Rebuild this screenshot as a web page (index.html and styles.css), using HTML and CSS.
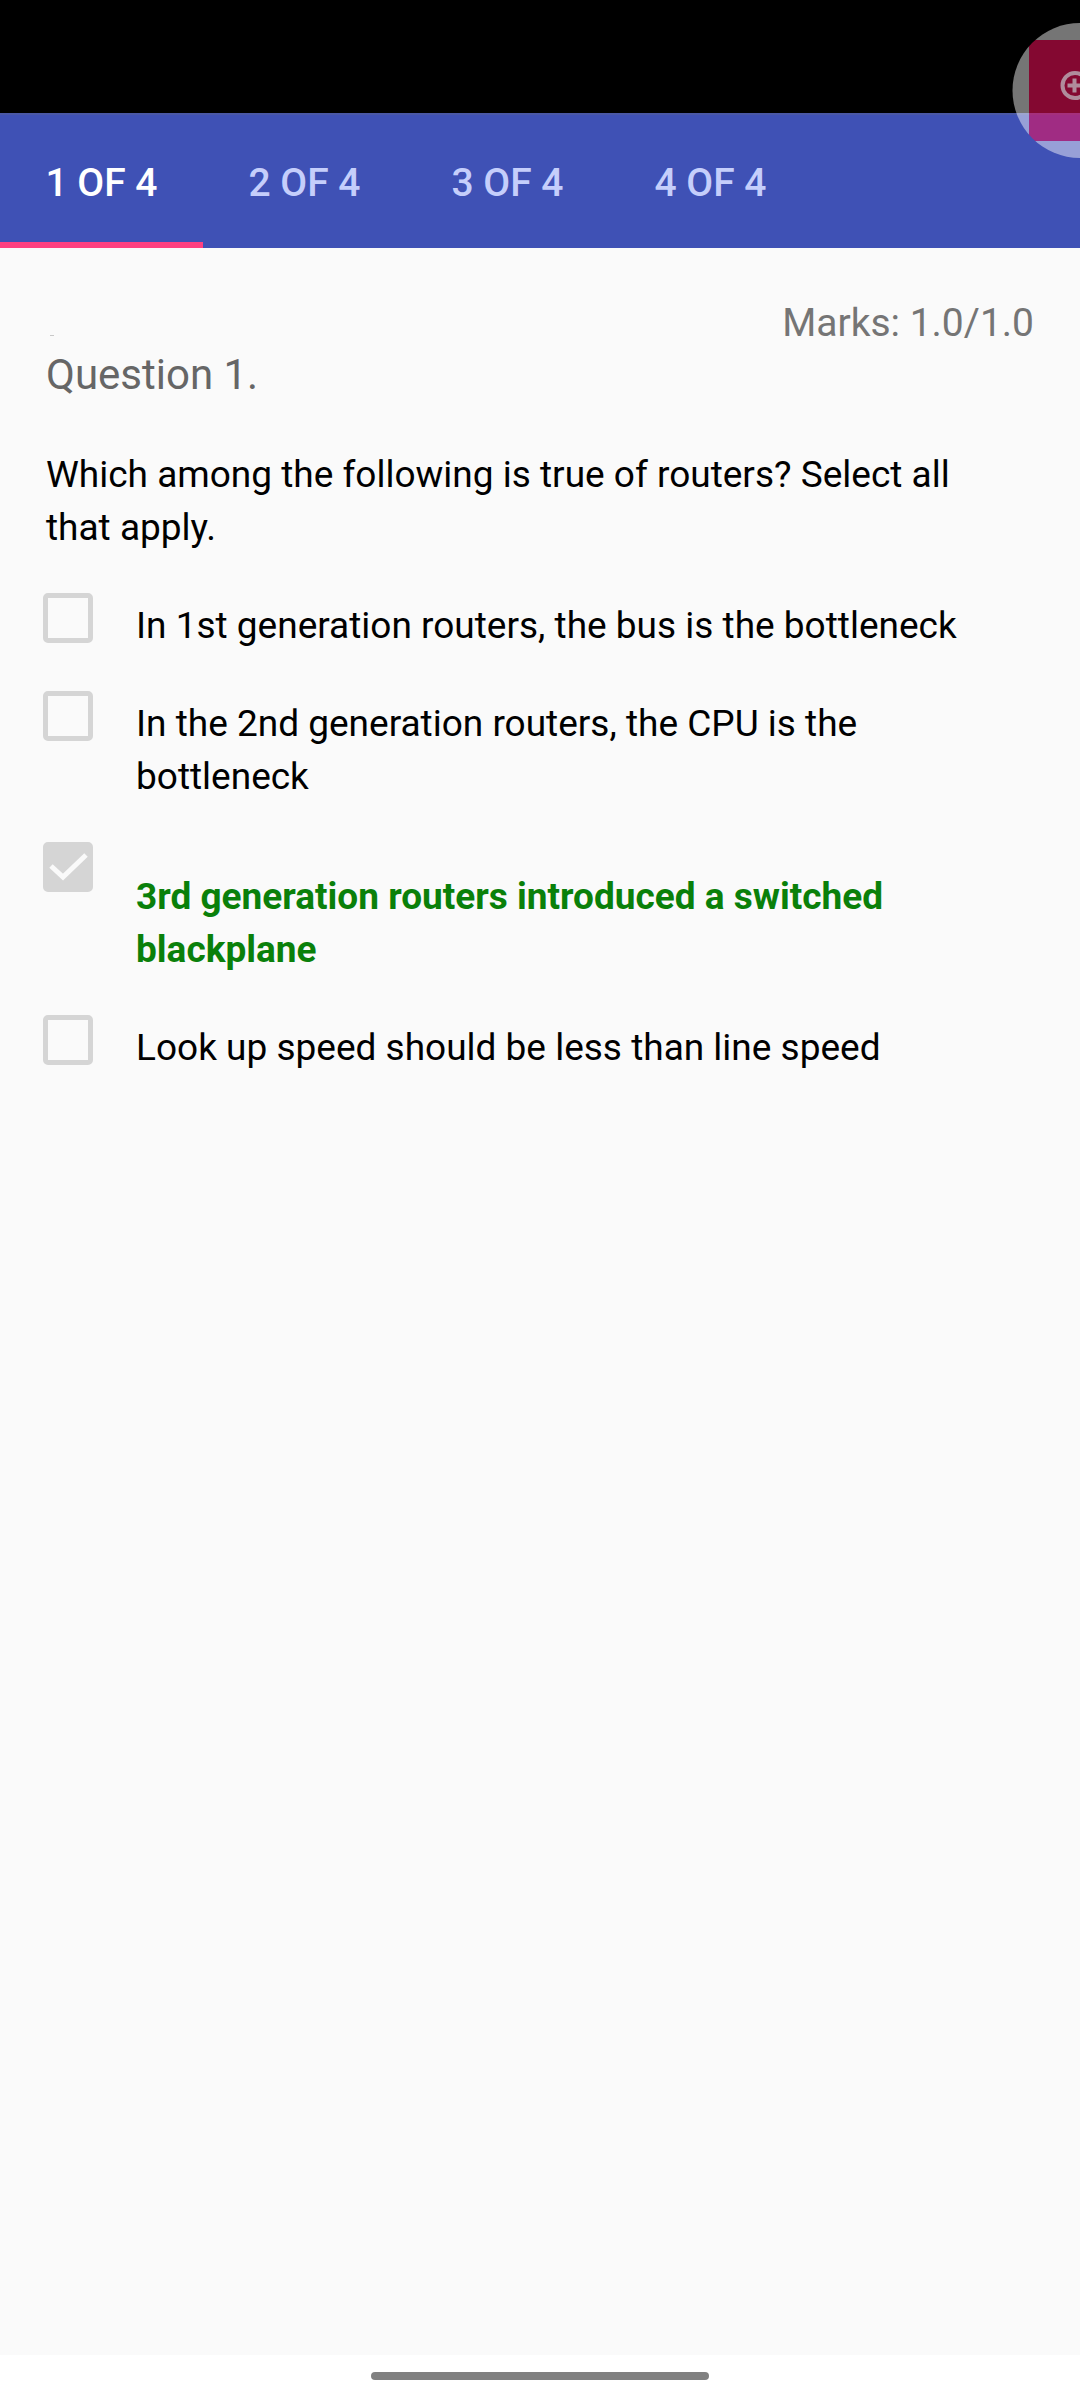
FILE: index.html
```html
<!DOCTYPE html>
<html lang="en">
<head>
<meta charset="utf-8">
<meta name="viewport" content="width=device-width, initial-scale=1">
<title>Quiz review</title>
<link rel="stylesheet" href="styles.css">
</head>
<body>
<div class="screen">
  <div class="status-bar"></div>
  <nav class="tabs" role="tablist" aria-label="Questions">
    <button class="tab tab-active" type="button" role="tab" aria-selected="true">1 OF 4</button>
    <button class="tab" type="button" role="tab" aria-selected="false">2 OF 4</button>
    <button class="tab" type="button" role="tab" aria-selected="false">3 OF 4</button>
    <button class="tab" type="button" role="tab" aria-selected="false">4 OF 4</button>
  </nav>
  <main class="content">
    <div class="marks-row">
      <span class="speck"></span>
      <span class="marks">Marks: 1.0/1.0</span>
    </div>
    <h1 class="title">Question 1.</h1>
    <p class="question">Which among the following is true of routers? Select all that apply.</p>
    <ul class="options">
      <li class="option">
        <input class="box" type="checkbox" id="opt1" disabled>
        <label class="label" for="opt1">In 1st generation routers, the bus is the bottleneck</label>
      </li>
      <li class="option">
        <input class="box" type="checkbox" id="opt2" disabled>
        <label class="label" for="opt2">In the 2nd generation routers, the CPU is the bottleneck</label>
      </li>
      <li class="option">
        <span class="check">
          <input class="box" type="checkbox" id="opt3" checked disabled>
          <svg class="tick" viewBox="0 0 50 50" aria-hidden="true"><path d="M8 24 L20 35 L43 13"/></svg>
        </span>
        <label class="label label-correct" for="opt3">3rd generation routers introduced a switched blackplane</label>
      </li>
      <li class="option">
        <input class="box" type="checkbox" id="opt4" disabled>
        <label class="label" for="opt4">Look up speed should be less than line speed</label>
      </li>
    </ul>
  </main>
  <footer class="nav-bar"><span class="handle"></span></footer>
  <button class="bubble" type="button" aria-label="Open recorder">
    <svg viewBox="0 0 68 135" aria-hidden="true">
      <defs>
        <clipPath id="disc"><circle cx="68" cy="67.5" r="67.5"/></clipPath>
        <mask id="ring">
          <rect width="68" height="135" fill="#fff"/>
          <rect x="17" y="17" width="51" height="101" fill="#000"/>
        </mask>
      </defs>
      <g clip-path="url(#disc)">
        <rect width="68" height="135" fill="#fff" fill-opacity=".46" mask="url(#ring)"/>
        <rect x="17" y="17" width="51" height="101" fill="#f00f59" fill-opacity=".55"/>
      </g>
      <g fill="none" stroke="#b08c9c" stroke-width="4">
        <circle cx="63" cy="62.5" r="12.5"/>
        <path d="M62.5 55.5v14M55.5 62.5h14"/>
      </g>
    </svg>
  </button>
</div>
</body>
</html>
```
FILE: styles.css
```css
* {
  box-sizing: border-box;
}

body {
  margin: 0;
  background: #fafafa;
  color: #000;
  font-family: Roboto, "Noto Sans", sans-serif;
}

.screen {
  position: relative;
  display: flex;
  flex-direction: column;
  min-height: 100vh;
  overflow: hidden;
}

.status-bar {
  height: 113px;
  background: #000;
}

.tabs {
  display: flex;
  height: 135px;
  background: #3f51b5;
  border-top: 2px solid #4a58a6;
}

.tab {
  min-width: 203px;
  padding: 9px 0 0;
  border: 0;
  border-bottom: 6px solid transparent;
  background: none;
  color: #c5cefb;
  font: 500 39px/46px Roboto, "Noto Sans", sans-serif;
}

.tab-active {
  border-bottom-color: #ff4081;
  color: #fff;
}

.content {
  flex: 1;
  padding: 52px 46px;
}

.marks-row {
  display: flex;
  align-items: center;
  justify-content: space-between;
  line-height: 46px;
}

.speck {
  width: 4px;
  height: 1px;
  margin: 24px 4px 0;
  background: #c8c8c8;
}

.marks {
  color: #757575;
  font-size: 39px;
}

.title {
  margin: 4px 0 49px;
  color: #666;
  font-size: 42px;
  font-weight: 400;
  line-height: 49px;
}

.question {
  margin: 0 0 39px;
  padding-right: 16px;
  font-size: 37px;
  line-height: 53px;
}

.options {
  display: flex;
  flex-direction: column;
  gap: 39px;
  margin: 0 0 0 -3px;
  padding: 0;
  list-style: none;
}

.option {
  display: flex;
  align-items: flex-start;
  gap: 43px;
}

.check {
  display: grid;
}

.check > * {
  grid-area: 1 / 1;
}

.box {
  flex: none;
  width: 50px;
  height: 50px;
  margin: 0;
  appearance: none;
  border: 5px solid #d5d5d5;
  border-radius: 5px;
}

.box:checked {
  background: #d5d5d5;
}

.tick {
  width: 50px;
  height: 50px;
  fill: none;
  stroke: #fafafa;
  stroke-width: 5;
}

.label {
  padding-top: 6px;
  font-size: 37px;
  line-height: 53px;
}

.label-correct {
  padding-top: 28px;
  color: #0a800a;
  font-weight: 700;
}

.nav-bar {
  display: flex;
  justify-content: center;
  height: 45px;
  padding-top: 17px;
  background: #fff;
}

.handle {
  width: 338px;
  height: 8px;
  border-radius: 4px;
  background: #808080;
}

.bubble {
  position: absolute;
  top: 23px;
  right: 0;
  width: 68px;
  height: 135px;
  padding: 0;
  border: 0;
  background: none;
}

.bubble svg {
  display: block;
  width: 100%;
  height: 100%;
}
```
